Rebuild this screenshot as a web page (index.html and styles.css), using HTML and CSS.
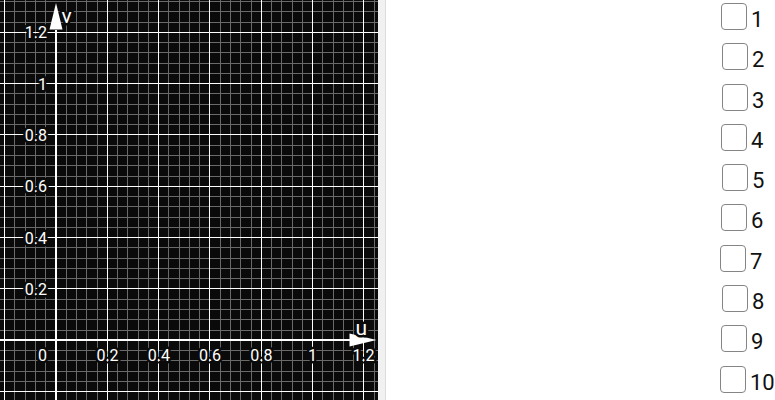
FILE: index.html
```html
<!DOCTYPE html>
<html>
<head>
<meta charset="utf-8">
<link rel="stylesheet" href="styles.css">
</head>
<body>
<div class="app">
  <div class="graphics">
    <svg class="plot" width="378" height="400" viewBox="0 0 378 400">
      <g id="grid"></g>
      <g class="axes">
        <rect x="55" y="30" width="2" height="370"></rect>
        <rect x="0" y="339" width="350" height="2"></rect>
        <polygon points="56,3 49.5,29.5 62.5,29.5"></polygon>
        <polygon points="376.5,340 349.5,333.5 349.5,346.5"></polygon>
      </g>
      <g class="ticks-y">
        <text x="47" y="38">1.2</text>
        <text x="47" y="90">1</text>
        <text x="47" y="141">0.8</text>
        <text x="47" y="192">0.6</text>
        <text x="47" y="244">0.4</text>
        <text x="47" y="295">0.2</text>
      </g>
      <g class="ticks-x">
        <text x="42.5" y="361">0</text>
        <text x="107.5" y="361">0.2</text>
        <text x="158.8" y="361">0.4</text>
        <text x="210" y="361">0.6</text>
        <text x="261.3" y="361">0.8</text>
        <text x="312.5" y="361">1</text>
        <text x="363.5" y="361">1.2</text>
      </g>
      <g class="axis-names">
        <text x="61.5" y="22.5">v</text>
        <text x="355.5" y="335">u</text>
      </g>
    </svg>
  </div>
  <div class="divider"></div>
  <div class="panel">
    <ul class="checks">
      <li class="check nudge-1"><span class="box"></span><span class="label">1</span></li>
      <li class="check"><span class="box"></span><span class="label">2</span></li>
      <li class="check"><span class="box"></span><span class="label">3</span></li>
      <li class="check nudge-1"><span class="box"></span><span class="label">4</span></li>
      <li class="check"><span class="box"></span><span class="label">5</span></li>
      <li class="check nudge-1"><span class="box"></span><span class="label">6</span></li>
      <li class="check nudge-2"><span class="box"></span><span class="label">7</span></li>
      <li class="check"><span class="box"></span><span class="label">8</span></li>
      <li class="check nudge-1"><span class="box"></span><span class="label">9</span></li>
      <li class="check nudge-2"><span class="box"></span><span class="label">10</span></li>
    </ul>
  </div>
</div>
<script src="script.js"></script>
</body>
</html>
```

FILE: styles.css
```css
html, body {
  margin: 0;
  padding: 0;
  background: #ffffff;
}

.app {
  display: flex;
  width: 775px;
  height: 400px;
  overflow: hidden;
}

.graphics {
  width: 378px;
  height: 400px;
  flex: none;
  background: #0a0a0a;
}

.plot {
  display: block;
}

.minor {
  fill: #6a6a6a;
}

.major {
  fill: #ffffff;
}

.axes rect,
.axes polygon {
  fill: #ffffff;
}

.plot text {
  font-family: Roboto, "Liberation Sans", sans-serif;
  fill: #ffffff;
  stroke: #0a0a0a;
  stroke-width: 5px;
  stroke-linejoin: round;
  paint-order: stroke;
}

.ticks-y text,
.ticks-x text {
  font-size: 16px;
}

.ticks-y text {
  text-anchor: end;
}

.ticks-x text {
  text-anchor: middle;
}

.axis-names text {
  font-size: 21px;
}

.divider {
  width: 7px;
  flex: none;
  background: #f1f1f1;
  border-right: 1px solid #dcdcdc;
}

.panel {
  flex: 1;
  min-width: 0;
  background: #ffffff;
  overflow: hidden;
}

.checks {
  list-style: none;
  margin: 0;
  padding: 3px 0 0 336px;
  display: flex;
  flex-direction: column;
  gap: 13.3px;
}

.check {
  display: flex;
  align-items: flex-start;
  height: 27px;
  white-space: nowrap;
}

.nudge-1 {
  margin-left: -1px;
}

.nudge-2 {
  margin-left: -2px;
}

.box {
  width: 26px;
  height: 27px;
  box-sizing: border-box;
  border: 1.5px solid #858585;
  border-radius: 4px;
  background: #ffffff;
  flex: none;
}

.label {
  font-family: Roboto, "Liberation Sans", sans-serif;
  font-size: 22px;
  line-height: 22px;
  color: #111111;
  padding-top: 6px;
  padding-left: 4px;
}
```

FILE: script.js
```js
(function () {
  var NS = 'http://www.w3.org/2000/svg';
  var grid = document.getElementById('grid');
  var x0 = 56, y0 = 340.3, step = 51.33 / 5;
  var W = 378, H = 400;
  var minors = [], majors = [];
  var k, p;
  for (k = -6; k <= 32; k++) {
    if (k === 0) continue;
    p = Math.round(x0 + k * step - 0.5);
    if (p < 0 || p >= W) continue;
    (k % 5 === 0 ? majors : minors).push(['v', p]);
  }
  for (k = -6; k <= 34; k++) {
    if (k === 0) continue;
    p = Math.round(y0 - k * step - 0.5);
    if (p < 0 || p >= H) continue;
    (k % 5 === 0 ? majors : minors).push(['h', p]);
  }
  function add(list, cls) {
    list.forEach(function (l) {
      var r = document.createElementNS(NS, 'rect');
      r.setAttribute('class', cls);
      if (l[0] === 'v') {
        r.setAttribute('x', l[1]); r.setAttribute('y', 0);
        r.setAttribute('width', 1); r.setAttribute('height', H);
      } else {
        r.setAttribute('x', 0); r.setAttribute('y', l[1]);
        r.setAttribute('width', W); r.setAttribute('height', 1);
      }
      grid.appendChild(r);
    });
  }
  add(minors, 'minor');
  add(majors, 'major');
})();
```
